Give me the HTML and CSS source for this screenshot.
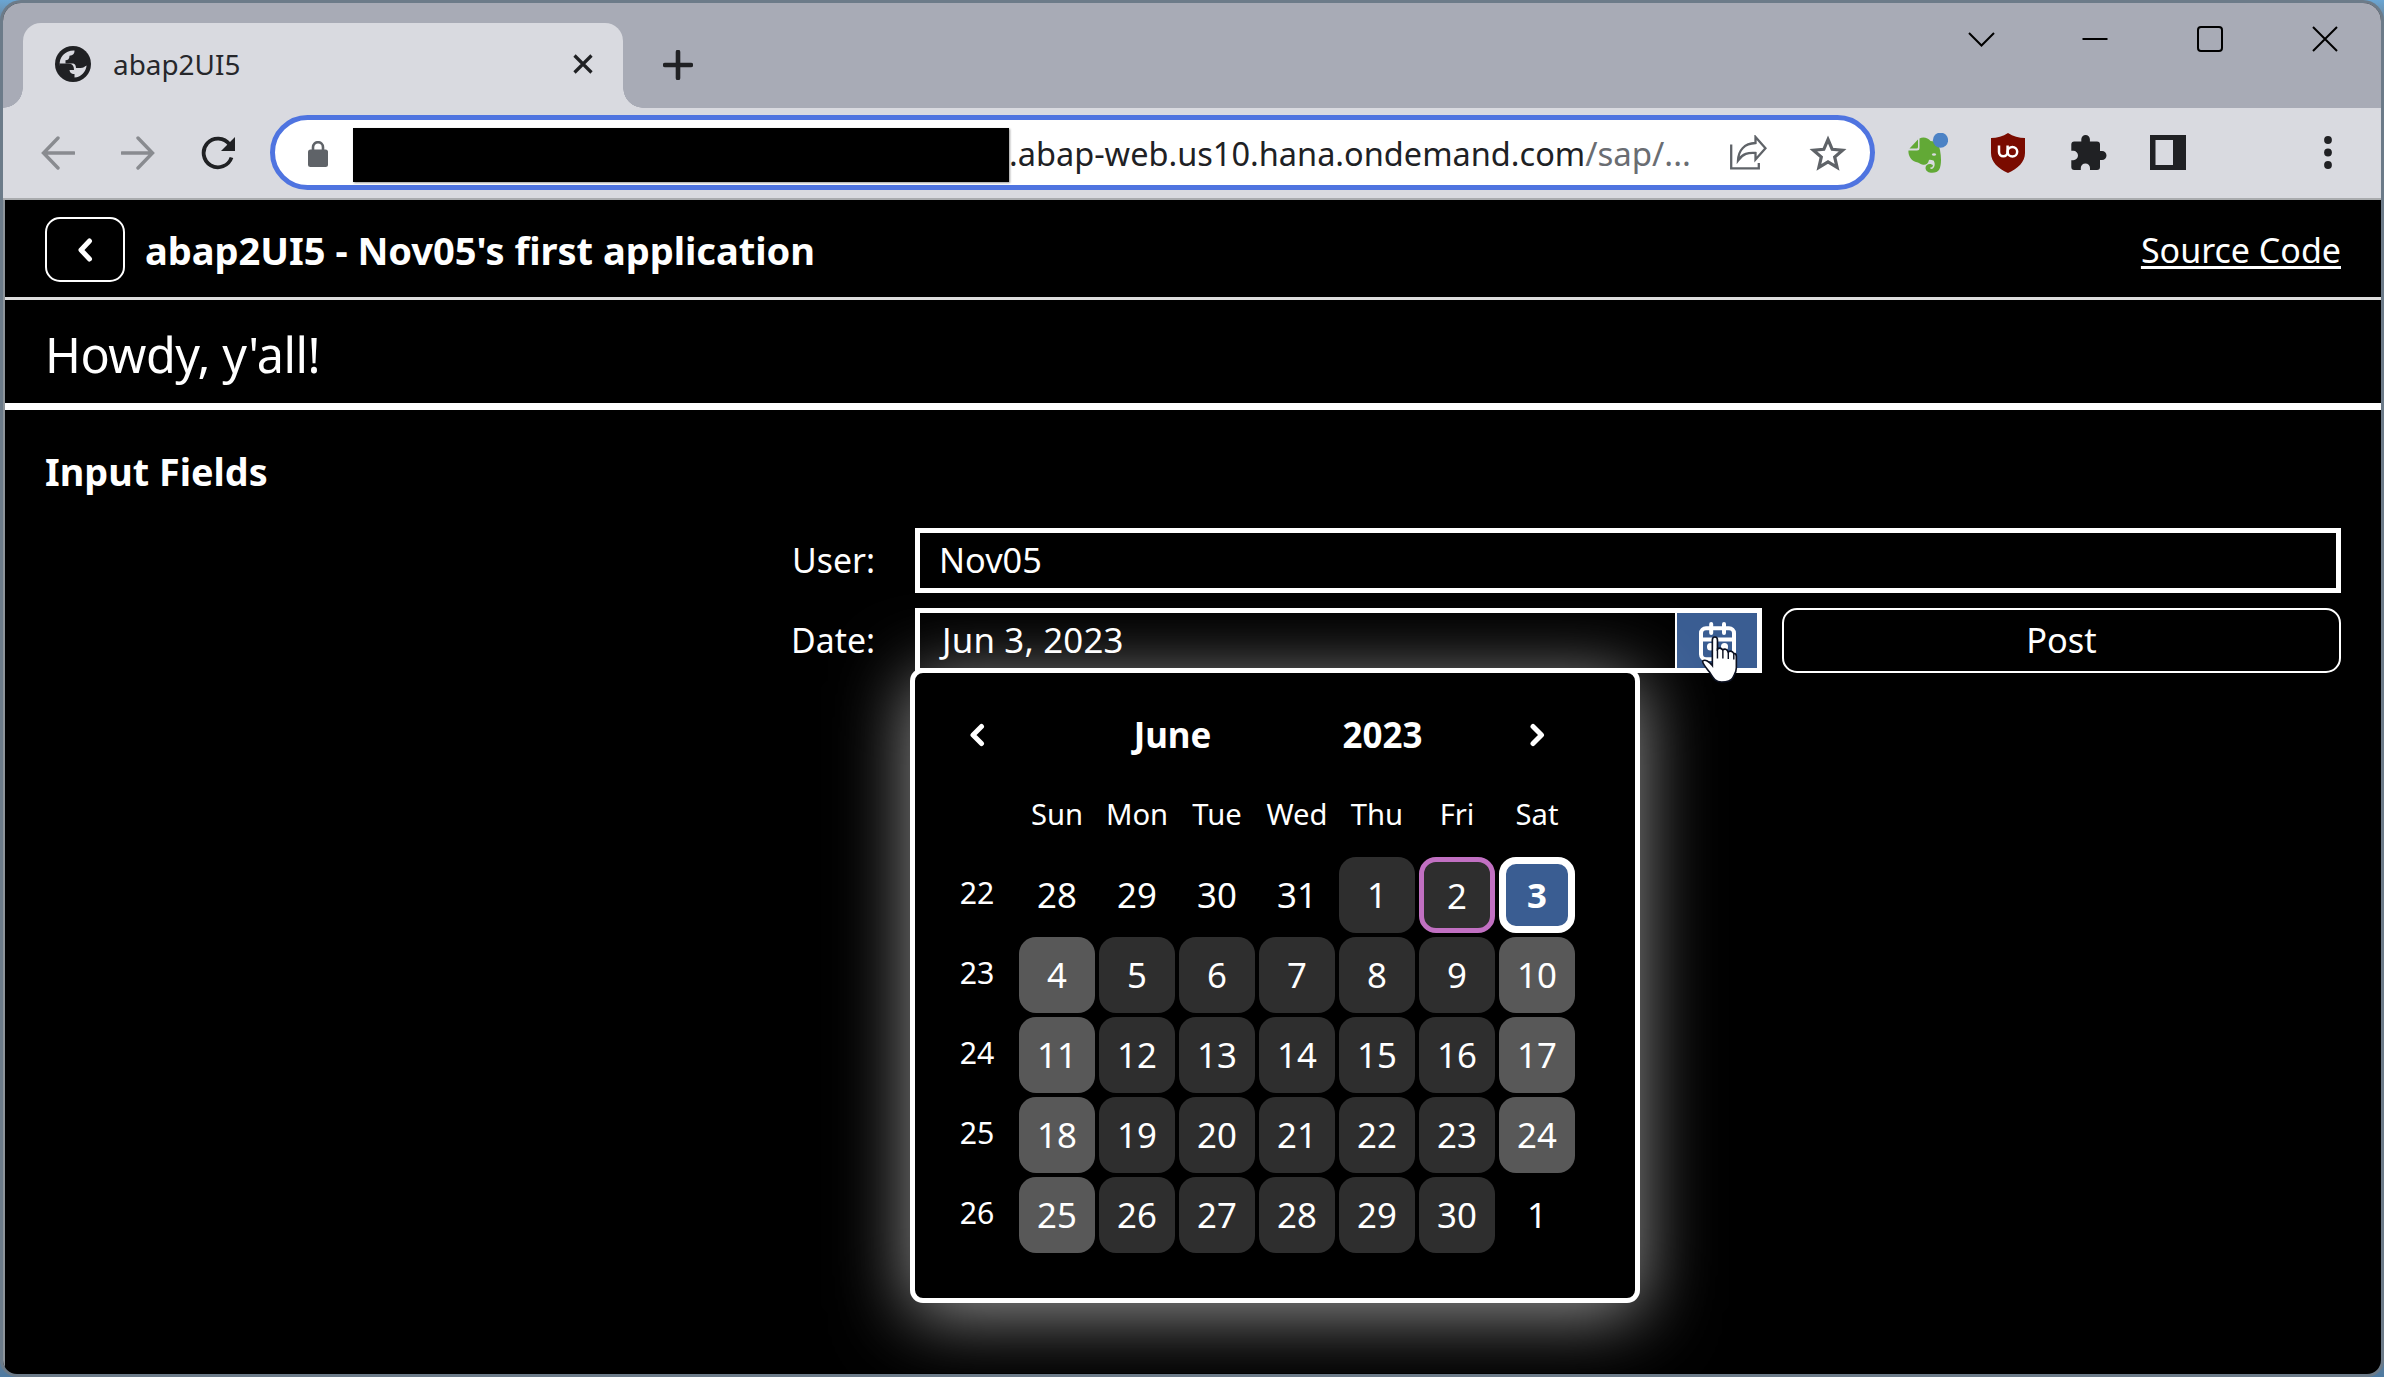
FILE: index.html
```
<!DOCTYPE html>
<html lang="en">
<head>
<meta charset="utf-8">
<title>abap2UI5</title>
<link rel="stylesheet" href="styles.css">
</head>
<body>
<div class="window">
  <header class="tabstrip">
    <div class="tab">
      <svg class="globe" viewBox="0 0 36 36"><circle cx="18" cy="18" r="18" fill="#202124"/><path d="M19.500 4.600 C19.500 8 18 9.500 14.500 9.800 C14.500 13 13 14.300 10.500 14.300 L10.500 17.500 L17 17.500 C20 17.500 21 19.500 21 22 L25.500 22 C28.500 22 29.500 20.500 31.600 19.500 C31 25.500 26 31.300 19.500 31.500 L19.500 28 C16 28 14.500 26 14.500 23.500 L4.800 19.500 C3.800 11.500 10 4.300 19.500 4.600Z" fill="#d9dae0"/><path d="M4.500 17.500 L13 17.500 C18 17.500 19 20.500 19 24 L14 24 L14 31 C8 29.500 4.500 24 4.500 17.500Z M20 4.600 L20 8.500 C20 10.500 18.500 11.500 17 11.500 L17 14.500 L20 15 C22 18 23 19.500 26 19.500 L32 19 C32 11 27 5.500 20 4.600Z" fill="#202124"/></svg>
      <span class="tab-title">abap2UI5</span>
      <svg class="tab-close" viewBox="0 0 20 20"><path d="M1.500 1.500 18.500 18.500M18.500 1.500 1.500 18.500" stroke="#202124" stroke-width="3.200"/></svg>
    </div>
    <svg class="new-tab" viewBox="0 0 30 30"><path d="M15 2V28M2 15H28" stroke="#202124" stroke-width="4.600" stroke-linecap="round"/></svg>
    <div class="window-controls">
      <svg viewBox="0 0 28 28"><path d="M3 8 15.500 20.500 28 8" /></svg>
      <svg viewBox="0 0 28 28"><path d="M1.500 14H26.500" /></svg>
      <svg viewBox="0 0 28 28"><rect x="2" y="2" width="24" height="24" rx="3"/></svg>
      <svg viewBox="0 0 28 28"><path d="M2 2 26 26M26 2 2 26"/></svg>
    </div>
  </header>

  <nav class="toolbar">
    <div class="nav-buttons">
      <svg class="dim" viewBox="0 0 34 34"><path d="M33 17H3M17 2 2.500 17 17 32"/></svg>
      <svg class="dim" viewBox="0 0 34 34"><path d="M1 17H31M17 2 31.500 17 17 32"/></svg>
      <svg class="reload" viewBox="0 0 34 34"><path d="M28.500 8.500 A14.300 14.300 0 1 0 30.500 21.500"/><path d="M34 1V15H20Z" fill="#202124" stroke="none"/></svg>
    </div>
    <div class="omnibox">
      <svg class="lock" viewBox="0 0 20 26"><rect y="8.500" width="20" height="17.500" rx="2.500" fill="#5f6368"/><path d="M5 10V6.200a5 5 0 0 1 10 0V10" fill="none" stroke="#5f6368" stroke-width="2.600"/></svg>
      <div class="redaction"></div>
      <div class="url">.abap-web.us10.hana.ondemand.com<span class="url-path">/sap/...</span></div>
      <svg class="share" viewBox="0 0 37 35" fill="none" stroke="#5f6368" stroke-width="2.300"><path d="M1.200 9.500V33.300H28.800V28"/><path d="M25.500 2V8C14 8.500 8.500 15.500 8 25.500C13 18.500 18 17.500 25.500 18V24.500L35.500 13.200Z"/></svg>
      <svg class="star" viewBox="0 0 38 36" fill="none" stroke="#5f6368" stroke-width="3.200"><path d="M19 4.500 23.200 14.300 33.600 15.200 25.700 22.100 28.100 32.400 19 26.900 9.900 32.400 12.300 22.100 4.400 15.200 14.800 14.300Z"/></svg>
    </div>
    <div class="extensions">
      <svg viewBox="0 0 40 40"><path d="M11.500 5.500 C15 3.500 20 4.500 22.500 8 C27.500 8 31 11 32 17 C33.500 25 33.300 32 31.500 36 C29 41.500 17.500 41 17.500 35 C17.500 30.500 23.500 30 25 32.500 L24 34.500 C22 33.500 21.500 36 23.500 36 C27 35.500 27.500 30 25.500 27.500 C23.500 27 22 26.500 21 27 C20 31.500 17 32.500 14 31.500 C12 31 11 29.500 8 29 C2 27.500 0 21 0.500 17.500 L9 17.500 Q11.500 17.500 11.500 15Z" fill="#62a936"/><path d="M1.500 15.500 10 6.500V14Q10 15.500 8.500 15.500Z" fill="#62a936"/><ellipse cx="26" cy="21.500" rx="2" ry="1.200" fill="#d9dae0"/><circle cx="32.500" cy="7.200" r="7.600" fill="#4c82c5"/></svg>
      <svg viewBox="0 0 40 40"><path d="M20 0 C25 3.500 31 5 37 5V20C37 29 30 35.500 20 40 C10 35.500 3 29 3 20V5C9 5 15 3.500 20 0Z" fill="#7a0b00"/><path d="M11 12.500V19A4.300 4.300 0 0 0 19.600 19V12.500" fill="none" stroke="#fff" stroke-width="2.500"/><circle cx="24.400" cy="18.800" r="4.800" fill="none" stroke="#fff" stroke-width="2.500"/></svg>
      <svg viewBox="0 0 40 40"><path d="M13.300 8.500V6.200A4.300 4.300 0 0 1 21.900 6.200V8.500H29Q32 8.500 32 11.500V18H34A4.500 4.500 0 0 1 34 27H32V34Q32 37 29 37H22V35A4.600 4.600 0 0 0 12.800 35V37H6.300Q3.300 37 3.300 34V27.200H5.300A4.700 4.700 0 0 0 5.300 17.800H3.300V11.500Q3.300 8.500 6.300 8.500Z" fill="#202124"/></svg>
      <svg viewBox="0 0 40 40"><path fill-rule="evenodd" d="M2 2H38V37H2ZM7.500 7V32H25V7Z" fill="#202124"/></svg>
      <i class="spacer"></i>
      <svg viewBox="0 0 40 40"><g fill="#202124"><circle cx="20" cy="7" r="3.900"/><circle cx="20" cy="19.500" r="3.900"/><circle cx="20" cy="32" r="3.900"/></g></svg>
    </div>
  </nav>

  <main class="page">
    <div class="page-header">
      <button class="back"><svg viewBox="0 0 16 24"><path d="M12.500 3 4 12 12.500 21"/></svg></button>
      <h1>abap2UI5 - Nov05's first application</h1>
      <a class="source">Source Code</a>
    </div>
    <div class="greeting">Howdy, y'all!</div>
    <section class="form">
      <h2>Input Fields</h2>
      <div class="form-grid">
        <label>User:</label>
        <div class="input"><span>Nov05</span></div>
        <label>Date:</label>
        <div class="date-row">
          <div class="input date">
            <span class="date-value">Jun 3, 2023</span>
            <div class="picker-button">
              <svg class="cal-icon" viewBox="0 0 37 39"><rect x="2" y="6.200" width="33" height="31" rx="5"/><path d="M2 17.500H35"/><path d="M12.200 2V11M25 2V11"/><path d="M11.500 24.500V25M25.500 24.500V25" stroke-width="7"/></svg>
            </div>
            <div class="popup">
              <div class="cal-head">
                <span class="arrow"><svg viewBox="0 0 16 24"><path d="M12.500 3.500 4 12 12.500 20.500"/></svg></span>
                <div class="cal-title"><b>June</b><b>2023</b></div>
                <span class="arrow"><svg viewBox="0 0 16 24"><path d="M4 3.500 12.500 12 4 20.500"/></svg></span>
              </div>
              <div class="weekdays"><span></span><span>Sun</span><span>Mon</span><span>Tue</span><span>Wed</span><span>Thu</span><span>Fri</span><span>Sat</span></div>
              <div class="days">
                <i>22</i><span class="other">28</span><span class="other">29</span><span class="other">30</span><span class="other">31</span><span>1</span><span class="today">2</span><span class="selected">3</span>
                <i>23</i><span class="weekend">4</span><span>5</span><span>6</span><span>7</span><span>8</span><span>9</span><span class="weekend">10</span>
                <i>24</i><span class="weekend">11</span><span>12</span><span>13</span><span>14</span><span>15</span><span>16</span><span class="weekend">17</span>
                <i>25</i><span class="weekend">18</span><span>19</span><span>20</span><span>21</span><span>22</span><span>23</span><span class="weekend">24</span>
                <i>26</i><span class="weekend">25</span><span>26</span><span>27</span><span>28</span><span>29</span><span>30</span><span class="other">1</span>
              </div>
            </div>
            <svg class="cursor" viewBox="0 0 36 46"><path d="M11 29V4Q11 1 13.500 1Q16 1 16 4V13Q18.500 10.500 21 13.500Q24.500 11.500 26.500 15.500Q30 13.500 32 17Q34.500 17 34.500 20V31C34.500 36 32 38 31 41C29 44.500 24 45 20 45C13 45 11.500 40 8 35C5 31 1 27 1.500 24.500C4 22.500 8 25 11 29Z" fill="#fff" stroke="#0b1020" stroke-width="1.600"/><path d="M16 12V22M21.300 13.500V22M26.600 15.500V22.500M32 17V23" stroke="#0b1020" stroke-width="1.400"/></svg>
          </div>
          <button class="post">Post</button>
        </div>
      </div>
    </section>
  </main>
</div>
</body>
</html>
```
FILE: styles.css
```
* { box-sizing: border-box; }
body {
  margin: 0;
  width: 2384px;
  height: 1377px;
  padding: 3px;
  overflow: hidden;
  font-family: "Noto Sans", sans-serif;
  background: linear-gradient(#6aa5d3, #6c7b89 2%, #6c7b89 98%, #4d7ba3);
}
svg { display: block; flex: none; }
h1, h2 { margin: 0; }
.window {
  display: flex;
  flex-direction: column;
  height: 1371px;
  border-radius: 18px 18px 14px 14px;
  overflow: hidden;
  background: #000;
  box-shadow: 0 0 0 3px #6c7b89;
}

/* Browser chrome */
.tabstrip {
  display: flex;
  height: 105px;
  padding: 20px 42px 0 20px;
  background: #a8abb6;
}
.tab {
  position: relative;
  display: flex;
  align-items: center;
  width: 600px;
  height: 85px;
  padding: 0 30px 4px 32px;
  background: #d9dae0;
  border-radius: 18px 18px 0 0;
}
.tab::before, .tab::after {
  content: "";
  position: absolute;
  bottom: 0;
  width: 20px;
  height: 20px;
}
.tab::before { left: -20px; background: radial-gradient(circle at 0 0, transparent 19.5px, #d9dae0 20px); }
.tab::after { right: -20px; background: radial-gradient(circle at 100% 0, transparent 19.5px, #d9dae0 20px); }
.globe { width: 36px; height: 36px; }
.tab-title { margin-left: 22px; font-size: 27.9px; color: #26272b; }
.tab-close { width: 20px; height: 20px; margin-left: auto; }
.new-tab { width: 30px; height: 30px; margin: 27px 0 0 40px; }
.window-controls { display: flex; gap: 87px; margin: 2px 0 0 auto; }
.window-controls svg { width: 28px; height: 28px; overflow: visible; fill: none; stroke: #000; stroke-width: 2; }
.toolbar {
  display: flex;
  align-items: center;
  height: 92px;
  padding: 0 0 1px 38px;
  background: #d9dae0;
  border-bottom: 2px solid #a9abae;
}
.nav-buttons { display: flex; gap: 46px; width: 229px; }
.nav-buttons svg { width: 34px; height: 34px; fill: none; stroke: #202124; stroke-width: 3.800; }
.nav-buttons .dim { stroke: #898b90; stroke-width: 3.400; stroke-linecap: round; }
.omnibox {
  display: flex;
  align-items: center;
  width: 1605px;
  height: 75px;
  padding: 0 23px 0 33px;
  background: #fff;
  border: 5px solid #4f74e0;
  border-radius: 38px;
}
.lock { width: 20px; height: 26px; margin: 2px 25px 0 0; }
.redaction { width: 656px; height: 54px; margin-top: 5px; background: #000; box-shadow: 1px 1px 2px #999; }
.url { flex: 1; font-size: 32.5px; line-height: 44px; white-space: nowrap; color: #202124; padding-top: 2px; }
.url-path { font-size: 33px; color: #6a6d72; }
.share { width: 37px; height: 35px; margin-right: 42px; }
.star { width: 38px; height: 36px; }
.extensions { display: flex; gap: 40px; margin-left: 33px; }
.extensions svg, .spacer { width: 40px; height: 40px; }

/* Application page */
.page {
  flex: 1;
  margin-bottom: 1px;
  overflow: hidden;
  border-left: 2px solid #8d949a;
  color: #fff;
}
.page-header {
  display: flex;
  align-items: center;
  height: 100px;
  padding: 2px 40px 0;
  border-bottom: 3px solid #fff;
  border-bottom-color: #ddd;
}
.back {
  display: grid;
  place-items: center;
  width: 80px;
  height: 65px;
  margin-right: 20px;
  background: #000;
  border: 2px solid #fff;
  border-radius: 15px;
}
.back svg { width: 16px; height: 24px; }
.back path, .arrow path { fill: none; stroke: #fff; stroke-width: 5; stroke-linecap: round; stroke-linejoin: round; }
h1 { flex: 1; font-size: 38.1px; line-height: 50px; letter-spacing: -.04px; }
.source { font-size: 34px; line-height: 48px; text-decoration: underline; text-decoration-thickness: 3px; text-underline-offset: 3px; text-decoration-skip-ink: none; }
.greeting {
  height: 110px;
  padding: 3px 40px 0;
  font-size: 48.5px;
  letter-spacing: -.5px;
  line-height: 102px;
  border-bottom: 7px solid #fff;
}
.form { padding: 32px 40px 0; }
h2 { font-size: 37.8px; line-height: 60px; }
.form-grid {
  display: grid;
  grid-template-columns: 830px 1fr;
  gap: 15px 40px;
  margin-top: 26px;
  font-size: 34.3px;
}
.form-grid label { text-align: right; font-size: 33.8px; line-height: 64px; }
.input {
  position: relative;
  display: flex;
  height: 65px;
  padding-left: 19px;
  line-height: 53px;
  border: 5px solid #fff;
}
.date-value { margin-left: 3px; font-size: 34.8px; letter-spacing: .2px; }
.date-row { display: flex; gap: 20px; }
.date { width: 847px; }
.picker-button {
  display: flex;
  width: 82px;
  margin-left: auto;
  padding: 9px 0 0 22px;
  background: #3a5d92;
  border-left: 2px solid #fff;
}
.cal-icon { width: 37px; height: 39px; fill: none; stroke: #fff; stroke-width: 4; stroke-linecap: round; }
.cursor { position: absolute; left: 781px; top: 23px; width: 37px; height: 47px; }
.post {
  flex: 1;
  height: 65px;
  padding: 0 0 2px;
  font: 34.4px/51px "Noto Sans", sans-serif;
  color: #fff;
  background: #000;
  border: 2px solid #fff;
  border-radius: 15px;
}

/* Calendar popup */
.popup {
  position: absolute;
  left: -10px;
  top: 55px;
  width: 730px;
  height: 635px;
  padding: 20px 58px 0 22px;
  background: #000;
  border: 5px solid #fff;
  border-radius: 13px;
  box-shadow: 0 11px 75px rgba(255, 255, 255, .6);
}
.cal-head { display: flex; height: 80px; }
.arrow { display: grid; place-items: center; width: 80px; padding-top: 4px; }
.arrow svg { width: 16px; height: 24px; }
.cal-title { display: flex; flex: 1; padding: 0 10px 0 51px; }
.cal-title b { width: 210px; text-align: center; font-size: 34.9px; line-height: 83px; }
.weekdays, .days { display: grid; grid-template-columns: repeat(8, 80px); text-align: center; }
.weekdays { height: 82px; font-size: 29.2px; line-height: 83px; }
.days { grid-auto-rows: 80px; }
.days i { font-style: normal; font-size: 30.3px; line-height: 75px; }
.days span {
  margin: 2px;
  font-size: 34.8px;
  line-height: 75px;
  background: #2e2e2e;
  border-radius: 17px;
}
.days .other { background: none; }
.days .weekend { background: #585858; }
.days .today { border: 5px solid #c170c2; line-height: 67px; }
.days .selected { border: 7px solid #fff; line-height: 61px; font-weight: 700; background: #3a5d92; }
```
